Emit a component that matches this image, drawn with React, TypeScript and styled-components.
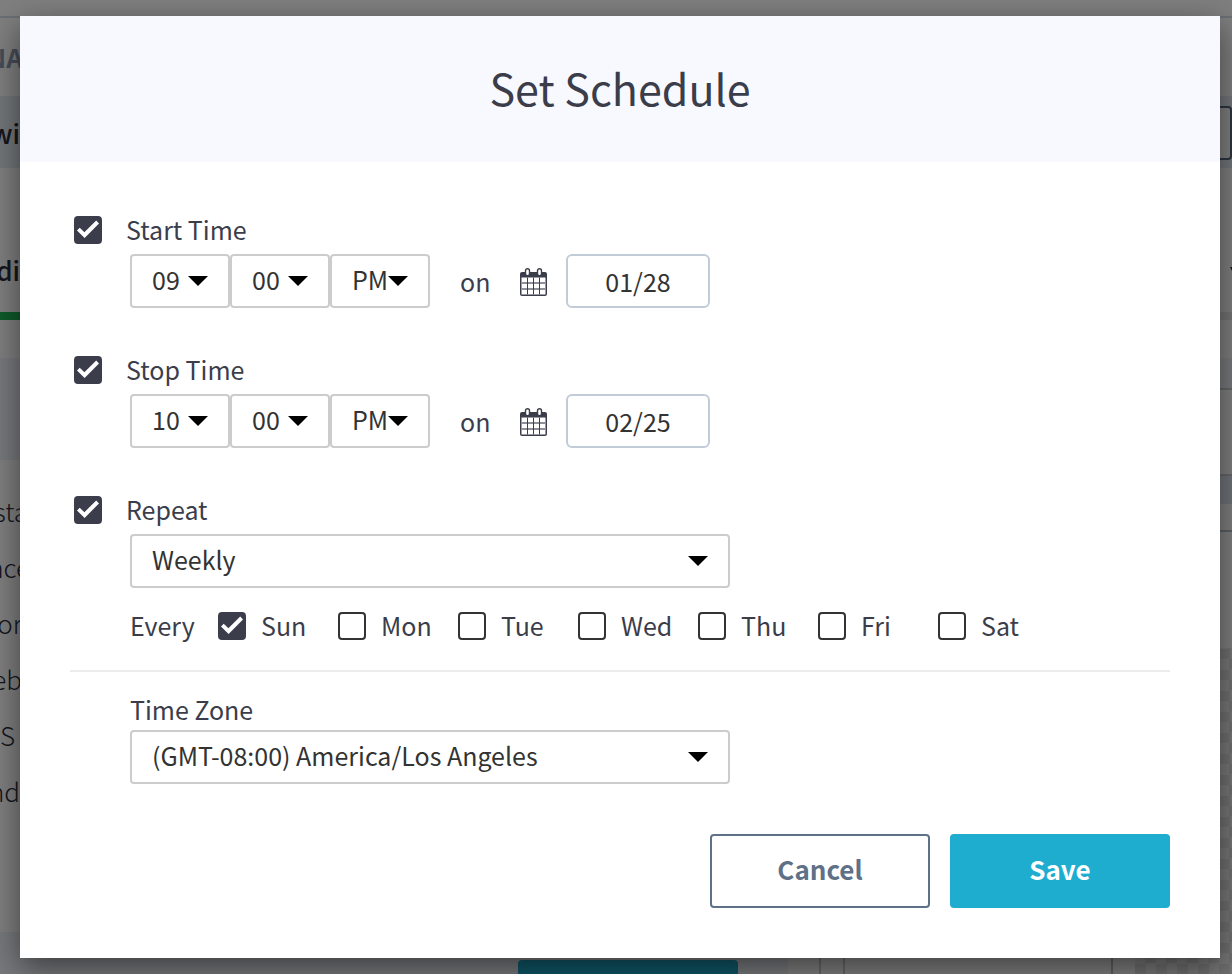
import React, { useState } from "react";
import styled, { createGlobalStyle } from "styled-components";

const ink = "#3b3d4b";
const fontStack = `"Noto Sans CJK SC", "Noto Sans", sans-serif`;

const GlobalStyle = createGlobalStyle`
  *, *::before, *::after { box-sizing: border-box; }
  body { margin: 0; background: #fff; color: ${ink}; font-family: ${fontStack}; font-size: 25px; line-height: 32px; }
`;

/* ---------- Page behind the dialog ---------- */

const Screen = styled.div`
  display: grid;
  grid-template-columns: minmax(0, 1fr);
  min-height: 100vh;
  overflow: hidden;
  > * { grid-area: 1 / 1; }
`;

const Backdrop = styled.div`
  background: rgba(0, 0, 0, 0.5);
`;

const Page = styled.div`
  display: flex;
  flex-direction: column;
  height: 100vh;
  overflow: hidden;
  background: #fff;
`;

const Strip = styled.div<{ $height: number; $color?: string; $top?: number }>`
  display: flex;
  justify-content: space-between;
  align-items: center;
  flex: none;
  height: ${(p) => p.$height}px;
  padding-top: ${(p) => p.$top ?? 0}px;
  background: ${(p) => p.$color ?? "#fff"};
`;

const Clipped = styled.span<{ $width: number; $weight?: number; $color?: string }>`
  display: flex;
  justify-content: flex-end;
  width: ${(p) => p.$width}px;
  font-size: 26px;
  font-weight: ${(p) => p.$weight ?? 400};
  color: ${(p) => p.$color ?? "#2a2d3c"};
`;

const OutlineBox = styled.span`
  width: 120px;
  height: 54px;
  border: 2px solid #5a6b80;
  border-radius: 4px;
  background: #fff;
`;

const Caret = styled.svg`
  width: 2px;
  height: 6px;
`;

const Content = styled.div`
  display: flex;
  justify-content: space-between;
  flex: 1;
  min-height: 0;
`;

const List = styled.div`
  display: flex;
  flex-direction: column;
  gap: 24px;
  padding-top: 35px;
  > span {
    font-family: "Noto Sans CJK SC Light", "Noto Sans CJK SC DemiLight", ${fontStack};
    font-weight: 300;
  }
`;

const Preview = styled.div`
  display: flex;
  flex-direction: column;
  width: 97px;
`;

const Checker = styled.div<{ $from: "top" | "bottom" }>`
  flex: 1;
  background: repeating-conic-gradient(#e0e0e0 0 25%, #f0f0f0 0 50%) left ${(p) => p.$from} / 21px 21px;
`;

const Footer = styled.div`
  display: flex;
  justify-content: space-between;
  align-items: flex-end;
  flex: none;
  height: 42px;
  padding-left: 518px;
  background: linear-gradient(90deg, #eef2f9 0 788px, #fff 788px 819px, #ccc 819px 821px, #fff 821px 843px, #ccc 843px 845px, #fff 845px 1111px, #b8c0c8 1111px 1113px, #fff 1113px);
`;

const FooterButton = styled.div`
  width: 220px;
  height: 14px;
  border-radius: 4px 4px 0 0;
  background: #1eaccf;
`;

const FooterPreview = styled.div`
  display: flex;
  align-self: stretch;
  width: 97px;
`;

/* ---------- Dialog ---------- */

const Dialog = styled.form`
  align-self: start;
  margin: 16px 12px 16px 20px;
  background: #fff;
  box-shadow: 0 10px 30px rgba(0, 0, 0, 0.5);
`;

const Header = styled.header`
  display: flex;
  align-items: center;
  justify-content: center;
  height: 146px;
  padding-bottom: 4px;
  background: #f8f9fe;
`;

const Title = styled.h1`
  margin: 0;
  font-size: 43px;
  line-height: 64px;
  font-weight: 400;
`;

const Body = styled.div`
  padding: 52px 50px 50px;
`;

const Field = styled.section`
  margin-bottom: 46px;
`;

const FieldLabel = styled.label`
  display: flex;
  align-items: center;
  gap: 24px;
  width: fit-content;
  height: 32px;
  margin: 0 0 8px 4px;
`;

const Caption = styled.span`
  padding-bottom: 2px;
`;

const Controls = styled.div`
  display: flex;
  align-items: center;
  margin-left: 60px;
`;

const CheckFrame = styled.span`
  display: grid;
  flex: none;
  width: 28px;
  height: 28px;
  > * { grid-area: 1 / 1; }
`;

const CheckInput = styled.input`
  appearance: none;
  width: 28px;
  height: 28px;
  margin: 0;
  border: 2px solid #333;
  border-radius: 4px;
  background: #fff;
  &:checked { background: ${ink}; border-color: ${ink}; }
  &:not(:checked) + svg { display: none; }
`;

const CheckMark = styled.svg`
  width: 28px;
  height: 28px;
  pointer-events: none;
`;

const SelectFrame = styled.span<{ $width: number }>`
  display: grid;
  align-items: center;
  width: ${(p) => p.$width}px;
  > * { grid-area: 1 / 1; }
`;

const SelectInput = styled.select`
  appearance: none;
  width: 100%;
  height: 54px;
  padding: 0 20px 4px;
  border: 2px solid #ccc;
  border-radius: 4px;
  background: #fff;
  color: #333;
  font: inherit;
  line-height: 40px;
`;

const Arrow = styled.svg`
  justify-self: end;
  width: 20px;
  height: 10px;
  margin-right: 22px;
  pointer-events: none;
`;

const On = styled.span`
  width: 30px;
  margin: 0 30px;
`;

const CalendarSvg = styled.svg`
  width: 28px;
  height: 28px;
  margin: 2px 18px 0 0;
`;

const DateInput = styled.input`
  width: 144px;
  height: 54px;
  padding: 0;
  border: 2px solid #c2ccd9;
  border-radius: 6px;
  background: #fff;
  color: #333;
  font: inherit;
  text-align: center;
`;

const Days = styled.div`
  display: flex;
  align-items: center;
  height: 28px;
  margin: 24px 0 30px 60px;
`;

const Every = styled(Caption)`
  width: 88px;
`;

const DayLabel = styled.label`
  display: flex;
  align-items: center;
  gap: 15px;
  width: 120px;
`;

const Divider = styled.hr`
  height: 2px;
  margin: 0 0 21px;
  border: 0;
  background: #ececec;
`;

const ZoneLabel = styled.label`
  display: block;
  margin: 0 0 5px 60px;
`;

const Actions = styled.footer`
  display: flex;
  justify-content: flex-end;
  gap: 20px;
  margin-top: 50px;
`;

const Button = styled.button<{ $primary?: boolean }>`
  width: 220px;
  height: 74px;
  padding: 0 0 4px;
  border: 2px solid ${(p) => (p.$primary ? "#1eaccf" : "#5f7186")};
  border-radius: 4px;
  background: ${(p) => (p.$primary ? "#1eaccf" : "#fff")};
  color: ${(p) => (p.$primary ? "#fff" : "#5f7186")};
  font: inherit;
  font-size: 26px;
  font-weight: 700;
`;

function Checkbox({ id, defaultChecked }: { id: string; defaultChecked?: boolean }) {
  return (
    <CheckFrame>
      <CheckInput type="checkbox" id={id} defaultChecked={defaultChecked} />
      <CheckMark viewBox="0 0 28 28" aria-hidden="true">
        <path d="M3 14.5 5.7 11.8 10.4 16.2 22.2 4.6 25 7.4 10.6 22Z" fill="#fff" />
      </CheckMark>
    </CheckFrame>
  );
}

function Select({ id, label, width, options }: { id: string; label?: string; width: number; options: string[] }) {
  const [value, setValue] = useState(options[0]);
  return (
    <SelectFrame $width={width}>
      <SelectInput id={id} aria-label={label} value={value} onChange={(e) => setValue(e.target.value)}>
        {options.map((o) => (
          <option key={o}>{o}</option>
        ))}
      </SelectInput>
      <Arrow viewBox="0 0 20 10" aria-hidden="true">
        <path d="M0 0H20L10 10Z" fill="#000" />
      </Arrow>
    </SelectFrame>
  );
}

function Calendar() {
  return (
    <CalendarSvg viewBox="0 0 28 28" aria-hidden="true">
      <path
        fillRule="evenodd"
        fill={ink}
        d="M2 4H25Q27 4 27 6V26Q27 28 25 28H2Q0 28 0 26V6Q0 4 2 4ZM1.5 9.5V26.5H25.5V9.5Z"
      />
      <path d="M1.5 15H25.5M1.5 21H25.5" stroke="#8f9098" strokeWidth="2" />
      <path d="M7.5 9.5V26.5M13.5 9.5V26.5M19.5 9.5V26.5" stroke={ink} strokeWidth="1" />
      <rect x="5.5" y="0.7" width="4" height="7" rx="2" fill="#fff" stroke={ink} strokeWidth="1.4" />
      <rect x="17.5" y="0.7" width="4" height="7" rx="2" fill="#fff" stroke={ink} strokeWidth="1.4" />
    </CalendarSvg>
  );
}

function TimeField({ id, label, hour, date }: { id: string; label: string; hour: string; date: string }) {
  return (
    <Field>
      <FieldLabel htmlFor={id}>
        <Checkbox id={id} defaultChecked />
        <Caption>{label}</Caption>
      </FieldLabel>
      <Controls>
        <Select id={`${id}-hour`} label={`${label} hour`} width={100} options={[hour, "11", "12"]} />
        <Select id={`${id}-minute`} label={`${label} minute`} width={100} options={["00", "15", "30", "45"]} />
        <Select id={`${id}-period`} label={`${label} period`} width={100} options={["PM", "AM"]} />
        <On>on</On>
        <Calendar />
        <DateInput type="text" aria-label={`${label} date`} defaultValue={date} />
      </Controls>
    </Field>
  );
}

const days = ["Sun", "Mon", "Tue", "Wed", "Thu", "Fri", "Sat"];
const listItems = [
  { text: "sta", width: 28 },
  { text: "nce", width: 30 },
  { text: "or", width: 22 },
  { text: "eb", width: 22 },
  { text: "S", width: 15 },
  { text: "nd", width: 20 },
];

export default function App() {
  return (
    <Screen>
      <GlobalStyle />
      <Page aria-hidden="true">
        <Strip $height={16} />
        <Strip $height={2} $color="#d5dfea" />
        <Strip $height={78}>
          <Clipped $width={23} $weight={700} $color="#8b9bb0">NA</Clipped>
        </Strip>
        <Strip $height={72} $top={2} $color="#e4ecf4">
          <Clipped $width={20} $weight={500}>wi</Clipped>
          <OutlineBox />
        </Strip>
        <Strip $height={144} $top={60}>
          <Clipped $width={20} $weight={500}>di</Clipped>
          <Caret viewBox="0 0 2 6"><path d="M0 0H2V4Z" fill="#4a2a1a" /></Caret>
        </Strip>
        <Strip $height={8} $color="linear-gradient(90deg, #1cb555 50%, #e8e8ec 50%)" />
        <Strip $height={38} />
        <Content>
          <div>
            <Strip $height={102} $color="#eef2f9" />
            <List>
              {listItems.map((item) => (
                <Clipped key={item.text} $width={item.width}>{item.text}</Clipped>
              ))}
            </List>
          </div>
          <Preview>
            <Strip $height={30} $color="#eef2f9" />
            <Strip $height={2} $color="#ccc" />
            <Strip $height={84} />
            <Strip $height={2} $color="#ccc" />
            <Strip $height={28} $color="#dfe7f0" />
            <Strip $height={26} />
            <Strip $height={2} $color="#b4c0cc" />
            <Strip $height={116} />
            <Checker $from="bottom" />
          </Preview>
        </Content>
        <Footer>
          <FooterButton />
          <FooterPreview>
            <Checker $from="top" />
          </FooterPreview>
        </Footer>
      </Page>
      <Backdrop />
      <Dialog role="dialog" aria-labelledby="schedule-title" onSubmit={(e) => e.preventDefault()}>
        <Header>
          <Title id="schedule-title">Set Schedule</Title>
        </Header>
        <Body>
          <TimeField id="start" label="Start Time" hour="09" date="01/28" />
          <TimeField id="stop" label="Stop Time" hour="10" date="02/25" />
          <FieldLabel htmlFor="repeat">
            <Checkbox id="repeat" defaultChecked />
            <Caption>Repeat</Caption>
          </FieldLabel>
          <Controls>
            <Select id="frequency" label="Repeat frequency" width={600} options={["Weekly", "Daily", "Monthly"]} />
          </Controls>
          <Days>
            <Every>Every</Every>
            {days.map((d) => (
              <DayLabel key={d} htmlFor={d}>
                <Checkbox id={d} defaultChecked={d === "Sun"} />
                <Caption>{d}</Caption>
              </DayLabel>
            ))}
          </Days>
          <Divider />
          <ZoneLabel htmlFor="zone">Time Zone</ZoneLabel>
          <Controls>
            <Select id="zone" width={600} options={["(GMT-08:00) America/Los Angeles", "(GMT-05:00) America/New York"]} />
          </Controls>
          <Actions>
            <Button type="button">Cancel</Button>
            <Button type="submit" $primary>Save</Button>
          </Actions>
        </Body>
      </Dialog>
    </Screen>
  );
}
